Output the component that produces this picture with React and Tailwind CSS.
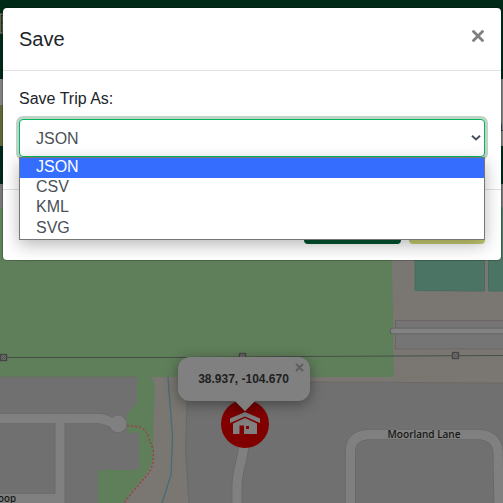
import React from "react";

const OPTIONS = ["JSON", "CSV", "KML", "SVG"];

function MapNode({ x, y }) {
  return (
    <g transform={`translate(${x} ${y})`}>
      <rect x="-3" y="-3" width="6" height="6" fill="#6f6f6f" stroke="#454545" strokeWidth="1.300" />
      <path d="M-2 -2L2 2M-2 2L2 -2" stroke="#4c4c4c" strokeWidth=".8" />
    </g>
  );
}

function TripMap() {
  return (
    <svg className="block h-[319px] w-full" viewBox="0 184 503 319">
      <rect y="184" width="503" height="319" fill="#707070" />
      <rect y="184" width="503" height="24" fill="#777" />
      <path d="M390 208H503V383L310 382V376H390Z" fill="#7a7772" />
      <path d="M0 208H391L394 377H0Z" fill="#5f7e5a" />
      <path d="M151 377H189L187 405L185.500 450L189 503H123L152 462Z" fill="#7a7772" />
      <path d="M189 377L187 405L185.500 450L189 503" fill="none" stroke="#646464" strokeWidth=".7" />
      <path d="M310 377H394V377H503V383L310 382Z" fill="#7a7772" />
      <path d="M0 377H137M310 382L503 383" stroke="#686763" strokeWidth=".8" />
      <path d="M137 376H151L155 385L153 440L154 455L149 470L123 503H98V470H139V433H128L126 415L137 404Z" fill="#5f7e5a" />
      <path d="M415 208H484.500V291L415 290.500ZM488.500 208H504V291H488.500Z" fill="#4b7465" stroke="#486c5f" />
      <rect x="395.500" y="320.500" width="112" height="28.500" fill="#757575" stroke="#6b6163" strokeWidth=".8" />
      <path d="M393 331H503" stroke="#5c5c5c" strokeWidth="6.500" strokeLinecap="round" />
      <path d="M393 331H503" stroke="#828282" strokeWidth="4.800" strokeLinecap="round" />
      <path d="M168 377L172.500 437L171 475L162 503" fill="none" stroke="#4b6b78" strokeWidth="1.400" />
      <path d="M0 357.500H180L300 356.500L503 355.500" fill="none" stroke="#474e46" strokeWidth="1" />
      <MapNode x={3.5} y={357.5} />
      <MapNode x={242.5} y={356.5} />
      <MapNode x={455.5} y={355.5} />

      <g fill="none" stroke="#646464" strokeWidth="10.500">
        <path d="M-2 418.500H98Q104 418.500 110 422L118 424M60 418.500V503M-2 498.500H60" />
        <path d="M244 445C242 464 237 470 237 486V504" />
        <path d="M350.500 504V451Q350.500 435 370 434.500H478Q496 435 498 451L499 504" />
        <circle cx="118" cy="424" r="3.800" />
      </g>
      <g fill="none" stroke="#808080" strokeWidth="9.300">
        <path d="M-2 418.500H98Q104 418.500 110 422L118 424M60 418.500V503M-2 498.500H60" />
        <path d="M244 445C242 464 237 470 237 486V504" />
        <path d="M350.500 504V451Q350.500 435 370 434.500H478Q496 435 498 451L499 504" />
      </g>
      <circle cx="118" cy="424" r="8.500" fill="#808080" />
      <path d="M127 425.500L139 427Q147 429 149 439L153 449Q155 465 148 474L136 488L124 503" fill="none" stroke="#9a4347" strokeWidth="1.400" strokeDasharray="2.200 1.800" />
      <g fontFamily='"Noto Sans", sans-serif' fontSize="10" fontWeight="500" fill="#161616" stroke="#808080" strokeWidth=".8" paintOrder="stroke">
        <text x="387.500" y="438" textLength="73" lengthAdjust="spacingAndGlyphs">Moorland Lane</text>
        <text x="-2" y="502" textLength="18" lengthAdjust="spacingAndGlyphs">oop</text>
      </g>
      <circle cx="245" cy="424" r="24" fill="#800000" />
      <g fill="#808080">
        <path d="M230 418.500V423L245 416.500L260 423V418.500L245 412Z" />
        <path d="M233 423.500L245 418L257 423.500V434H244V425.500H239.500V434H233Z" />
        <path d="M246 426H249V429H246Z" fill="#800000" />
      </g>
    </svg>
  );
}

function Popup() {
  return (
    <div className="absolute left-[178px] top-[357px] h-11 w-[132px]">
      <div className="absolute left-[60px] top-[37px] size-3.5 rotate-45 bg-[#808080] shadow-[0_3px_14px_rgba(0,0,0,0.4)]" />
      <div className="relative flex h-full items-center justify-center rounded-xl bg-[#808080] text-[12px] font-bold text-[#202020] shadow-[0_3px_14px_rgba(0,0,0,0.4)]">
        <span className="-ml-px">38.937, -104.670</span>
        <svg className="absolute right-[6px] top-[6px]" width="9" height="9" viewBox="0 0 9 9">
          <path d="M1 1L8 8M8 1L1 8" stroke="#5e5e5e" strokeWidth="2" />
        </svg>
      </div>
      <div className="absolute left-[57px] top-[44px] h-[10px] w-5 bg-[#808080] [clip-path:polygon(0_0,100%_0,50%_100%)]" />
    </div>
  );
}

function Page() {
  return (
    <div className="flex h-full flex-col overflow-hidden">
      <header className="h-[79px] shrink-0 bg-[#002917] pt-[9px]">
        <span className="-ml-[2px] block text-[27px] leading-[30px] text-[#17301a] [-webkit-text-stroke:1px_#77796f]">E</span>
      </header>
      <div className="flex h-[67px] shrink-0 flex-col bg-[#808080]">
        <div className="mt-[26px] flex h-[41px] items-center justify-between">
          <div className="h-full w-10 bg-[#636639]" />
          <span className="text-base text-[#33331c]">a</span>
        </div>
      </div>
      <div className="h-[38px] shrink-0 bg-[#002917]" />
      <TripMap />
    </div>
  );
}

function FormatSelect() {
  return (
    <div className="relative mt-2">
      <div className="flex h-[38px] items-center justify-between rounded border border-[#00b85c] bg-white pl-4 pr-[3px] text-[#495057] shadow-[0_0_0_3px_#bfd3c8]">
        <span className="pt-[2px]">JSON</span>
        <svg width="10" height="6" viewBox="0 0 10 6" fill="none">
          <path d="M1 .8L5 4.500L9 .8" stroke="#495057" strokeWidth="2" />
        </svg>
      </div>
      <ul className="absolute inset-x-0 top-[38px] border border-[#767676] bg-white leading-[18px] text-[#495057] shadow-[0_5px_16px_rgba(0,0,0,0.28)]">
        {OPTIONS.map((name, i) => (
          <li
            key={name}
            className={
              i === 0
                ? "h-5 bg-[#356eff] pl-4 text-white"
                : i === 2
                  ? "h-[21px] pl-4"
                  : "h-5 pl-4"
            }
          >
            {name}
          </li>
        ))}
      </ul>
    </div>
  );
}

function SaveDialog() {
  return (
    <section className="absolute left-[3px] top-2 flex h-[252px] w-[498px] flex-col rounded bg-white text-[#212529] shadow-[0_0_0_1px_rgba(0,0,0,0.2)]">
      <header className="flex h-[63px] items-start justify-between border-b border-[#dee2e6] pl-4 pr-[17px] pt-4">
        <h1 className="text-xl leading-[30px]">Save</h1>
        <svg className="mt-[6px]" width="12" height="12" viewBox="0 0 12 12">
          <path d="M1.500 1.500L10.500 10.500M10.500 1.500L1.500 10.500" stroke="#7f7f7f" strokeWidth="2.800" strokeLinecap="round" />
        </svg>
      </header>
      <div className="h-[118px] px-4 pt-4">
        <p className="leading-6">Save Trip As:</p>
        <FormatSelect />
      </div>
      <footer className="flex h-[71px] justify-end gap-2 border-t border-[#dee2e6] px-4 pt-4">
        <div className="h-[38px] w-[97px] rounded bg-[#00532f]" />
        <div className="h-[38px] w-[76px] rounded bg-[#c6cc71]" />
      </footer>
    </section>
  );
}

export default function App() {
  return (
    <main className="relative h-[503px] w-[503px] overflow-hidden font-['Liberation_Sans',Arial,sans-serif] text-base">
      <Page />
      <Popup />
      <SaveDialog />
    </main>
  );
}
